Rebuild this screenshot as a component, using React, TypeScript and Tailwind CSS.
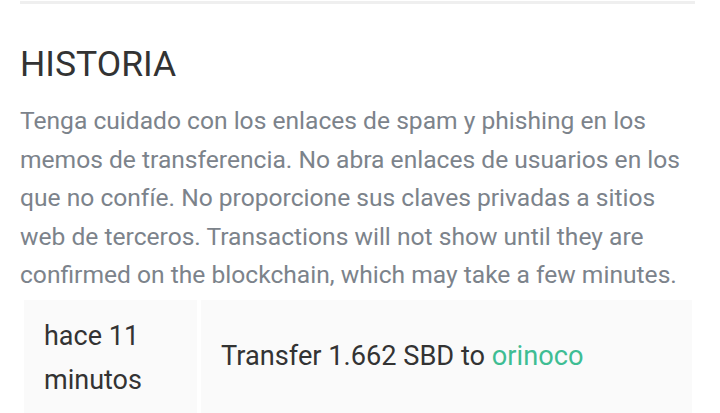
const rows = [
  { when: 'hace 11 minutos', amount: '1.662 SBD', to: 'orinoco' },
];

export default function App() {
  return (
    <div className="w-[720px] h-[413px] overflow-hidden bg-white font-['Roboto',sans-serif]">
      <div className="px-5">
        <div className="h-[3px] mt-[1px] w-[675px] bg-[#efefef]" />
        <h2 className="mt-[36px] text-[35.5px] leading-[48px] text-[#333] font-normal">HISTORIA</h2>
        <p className="mt-[14px] text-[24.6px] leading-[38.5px] text-[#7c838b]">
          Tenga cuidado con los enlaces de spam y phishing en los memos de transferencia. No abra enlaces de
          usuarios en los que no confíe. No proporcione sus claves privadas a sitios web de terceros. Transactions
          will not show until they are confirmed on the blockchain, which may take a few minutes.
        </p>
        <table className="w-[676px] border-separate border-spacing-[4px] mt-[1px]">
          <tbody>
            {rows.map((r, i) => (
              <tr key={i}>
                <td className="w-[173px] bg-[#fafafa] pl-5 pr-4 pt-[14px] pb-[11px] text-[27px] leading-[44px] text-[#333] align-top">
                  {r.when}
                </td>
                <td className="bg-[#fafafa] pl-5 text-[27.2px] leading-[44px] text-[#333]">
                  Transfer {r.amount} to <span className="text-[#3ebd93]">{r.to}</span>
                </td>
              </tr>
            ))}
          </tbody>
        </table>
      </div>
    </div>
  );
}
